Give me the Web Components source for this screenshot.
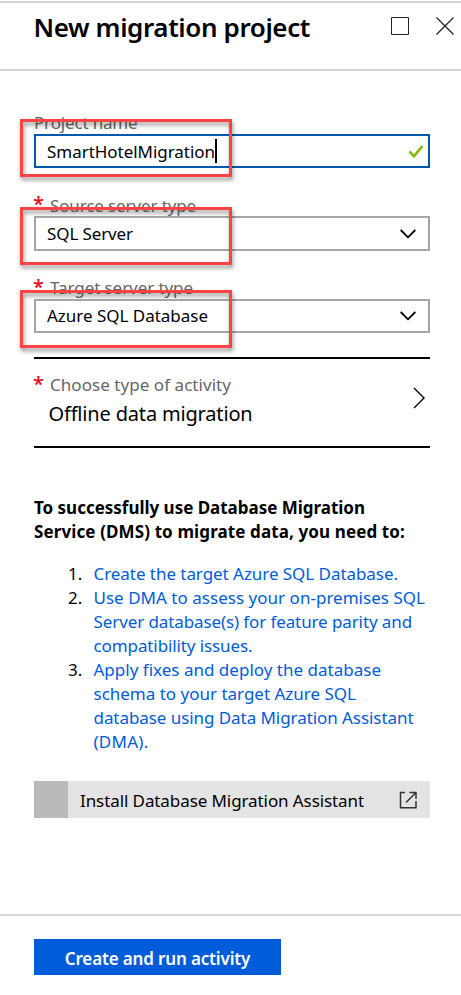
<!DOCTYPE html>
<html lang="en"><head><meta charset="utf-8"><title>New migration project</title>
<style>
body{margin:0;background:#fff;color:#000;font:17px/24px "Noto Sans","Open Sans",sans-serif}
</style></head><body>
<migration-blade></migration-blade>
<script>
const define=(name,html,ready)=>customElements.define(name,class extends HTMLElement{
  connectedCallback(){
    if(this.shadowRoot)return;
    this.attachShadow({mode:'open'}).innerHTML=html;
    if(ready)ready.call(this,this.shadowRoot);
  }
});

// One line of text whose tracking is adjusted to a given measure.
define('text-line','<style>:host{display:block;white-space:nowrap;width:max-content}</style><slot></slot>',function(){
  const want=+this.getAttribute('measure'),n=this.textContent.length;
  this.style.letterSpacing=(want-this.getBoundingClientRect().width)/n+'px';
});

define('blade-header',`<style>
:host{display:flex;box-sizing:border-box;height:71px;border-bottom:2px solid #d5d5d5;padding:0 7px 0 33.500px;align-items:flex-start;background:linear-gradient(#d5d5d5,#d5d5d5) 0 1px/100% 2px no-repeat}
h1{margin:9px auto 0 0;font-size:26px;line-height:36px;font-weight:600}
svg{display:block;margin-top:17px}.x{margin-left:27px}
</style><h1><slot></slot></h1>
<svg width="18" height="18" fill="none" stroke="#222"><path d="M.5.5h17v17H.5z"/></svg>
<svg class="x" width="18" height="18" fill="none" stroke="#222" stroke-width="1.2"><path d="M.5.5l17 17M17.5.5l-17 17"/></svg>`);

define('field-label',`<style>
:host{display:flex;color:#666;height:24px;line-height:26px}
:host([required])::before{content:"*";color:#e81123;width:16px;font-size:20px;font-weight:600;line-height:24px;text-indent:-1px}
</style><slot></slot>`);

define('form-box',`<style>
:host{display:flex;box-sizing:border-box;height:34px;border:2px solid #a6a6a6;padding:0 4px 0 11px;align-items:center;justify-content:space-between}
:host([kind=input]){border-color:#0058ad;line-height:26px}
.value{display:flex;align-items:center}
:host([kind=input]) .value{padding-top:1px}
.caret{width:2px;height:24px;background:#000;margin-top:-2px}
svg{display:block;fill:none}
.chev{margin-right:8px}
</style><span class="value"><slot></slot></span>`,function(root){
  if(this.getAttribute('kind')==='input'){
    root.querySelector('.value').insertAdjacentHTML('beforeend','<i class="caret"></i>');
    root.innerHTML+='<svg width="16" height="14" stroke="#7fba00" stroke-width="2.6"><path d="M1.5 7.5L6 12.2L14.5 2"/></svg>';
  }else root.innerHTML+='<svg class="chev" width="16" height="10" stroke="#000" stroke-width="1.8"><path d="M.7 1L8 8.3L15.3 1"/></svg>';
});

define('activity-picker',`<style>
:host{display:flex;box-sizing:border-box;height:91px;border:solid #000;border-width:2px 0;margin-top:24px;padding:13px 5px 0 0;justify-content:space-between}
.val{font-size:20px;line-height:30px;margin:3px 0 0 14.500px}
svg{display:block;margin-top:15px}
</style><div><slot name="label"></slot><div class="val"><slot></slot></div></div>
<svg width="12" height="22" fill="none" stroke="#000" stroke-width="1.4"><path d="M1 1l10 10L1 21"/></svg>`);

define('step-item',`<style>
:host{display:grid;grid-template-columns:25.500px 1fr;color:#015cda}
b{font-weight:400;color:#000}
</style><b></b><div><slot></slot></div>`,function(r){r.querySelector('b').textContent=this.getAttribute('number')+'.'});

define('link-bar',`<style>
:host{display:flex;height:37px;background:#e4e4e4;align-items:center;margin-top:27px;padding-right:12px;line-height:28px}
i{width:34px;height:37px;background:#bababa;margin-right:12px}
svg{margin-left:auto}
</style><i></i><slot></slot>
<svg width="19" height="18" fill="none" stroke="#333" stroke-width="1.5"><path d="M6 1.500H1.500v15.300h15.500V10M7 11.500L17 1.500M10.500 1.500H17V8"/></svg>`,function(r){
  this.querySelector('text-line').style.paddingTop='2px';
});

define('blade-footer',`<style>
:host{display:block;box-sizing:border-box;height:81px;border-top:2px solid #d5d5d5;padding:23px 34px 0}
button{display:flex;justify-content:center;align-items:center;width:247px;height:36px;border:0;padding:3px 0 0;background:#015cda;color:#fff;font:600 17px/24px "Noto Sans","Open Sans",sans-serif}
</style><button><slot></slot></button>`);

define('focus-frame',`<style>
:host{position:absolute;left:20px;box-sizing:border-box;width:212px;height:58px;border:3px solid #ff4343;filter:drop-shadow(1px 3px 2px rgba(0,0,0,.45));pointer-events:none}
</style>`);

define('migration-blade',`<style>
:host{display:flex;flex-direction:column;position:relative;height:995px;overflow:hidden}
main{padding:39px 31px 0 34px;flex:1}
.second{margin-top:24px}.second form-box{height:35px}.third{margin-top:24px}
.second field-label{line-height:28px}
h2{font-size:17px;line-height:24px;font-weight:700;margin:48px 0 18px}
.steps{padding-left:34px}
</style>
<blade-header><text-line measure="276.5">New migration project</text-line></blade-header>
<main>
<section><field-label><text-line measure="103.5">Project name</text-line></field-label><form-box kind="input"><text-line measure="168">SmartHotelMigration</text-line></form-box></section>
<section class="second"><field-label required><text-line measure="146">Source server type</text-line></field-label><form-box><text-line measure="86">SQL Server</text-line></form-box></section>
<section class="third"><field-label required><text-line measure="143">Target server type</text-line></field-label><form-box><text-line measure="161">Azure SQL Database</text-line></form-box></section>
<activity-picker><field-label slot="label" required><text-line measure="181">Choose type of activity</text-line></field-label><text-line measure="204">Offline data migration</text-line></activity-picker>
<h2><text-line measure="331">To successfully use Database Migration</text-line><text-line measure="371">Service (DMS) to migrate data, you need to:</text-line></h2>
<div class="steps">
<step-item number="1"><text-line measure="304.5">Create the target Azure SQL Database.</text-line></step-item>
<step-item number="2"><text-line measure="331.5">Use DMA to assess your on-premises SQL</text-line><text-line measure="318.5">Server database(s) for feature parity and</text-line><text-line measure="159">compatibility issues.</text-line></step-item>
<step-item number="3"><text-line measure="287.5">Apply fixes and deploy the database</text-line><text-line measure="262.5">schema to your target Azure SQL</text-line><text-line measure="320">database using Data Migration Assistant</text-line><text-line measure="55">(DMA).</text-line></step-item>
</div>
<link-bar><text-line measure="284">Install Database Migration Assistant</text-line></link-bar>
</main>
<blade-footer><text-line measure="185.5">Create and run activity</text-line></blade-footer>
<focus-frame style="top:119px"></focus-frame><focus-frame style="top:207px"></focus-frame><focus-frame style="top:290px"></focus-frame>`);
</script></body></html>
